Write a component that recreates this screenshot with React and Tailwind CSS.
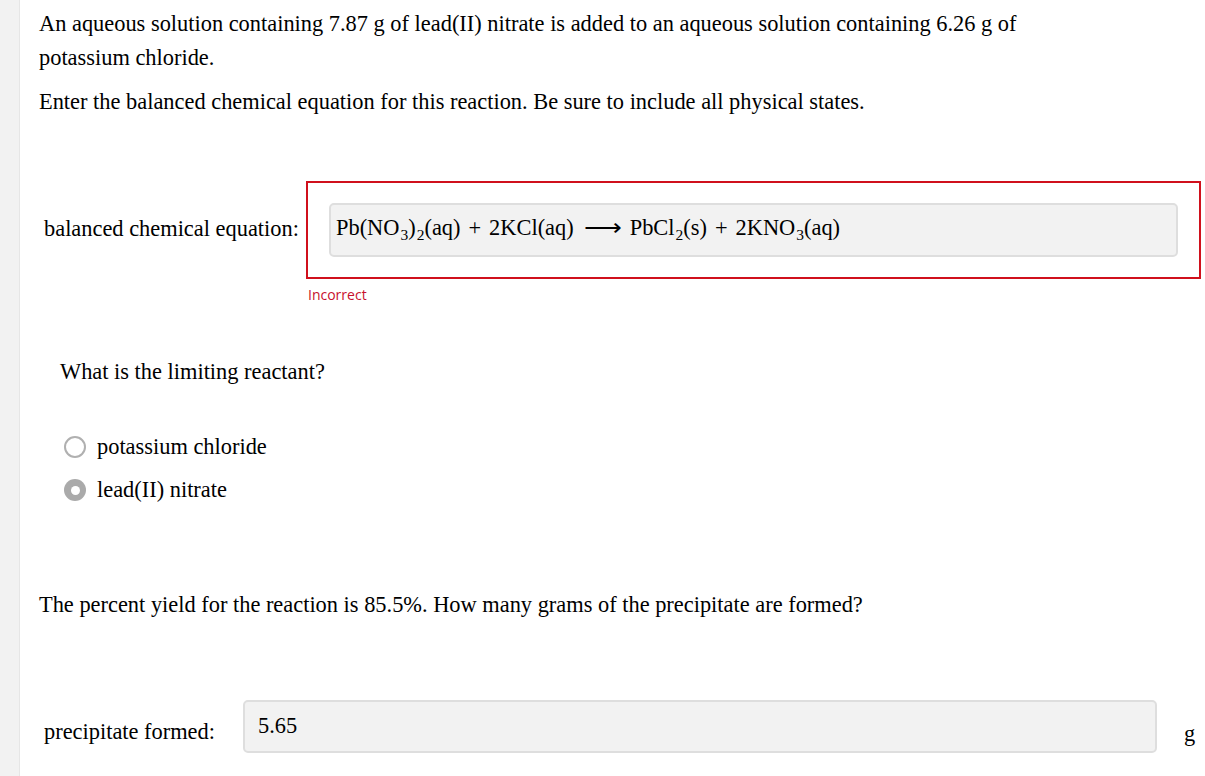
import React from "react";

const serif = { fontFamily: '"Liberation Serif", "Times New Roman", serif' };

function Sub({ children }) {
  return <sub className="text-[15.5px] relative top-[5px] align-baseline ml-[1px]">{children}</sub>;
}

function Plus() {
  return <span className="mx-[8px]">+</span>;
}

export default function App() {
  return (
    <div className="flex min-h-screen bg-white text-black leading-[30px]" style={serif}>
      <div className="w-[20px] shrink-0 bg-[#f2f2f2] border-r border-[#e6e6e6]" />
      <div className="flex-1 pl-[19px] pr-[4px] pt-[7px] text-[22.4px]">
        <p className="leading-[34px] pr-[150px]">
          An aqueous solution containing 7.87 g of lead(II) nitrate is added to an aqueous solution containing 6.26 g of potassium chloride.
        </p>
        <p className="leading-[34px] mt-[10px]">
          Enter the balanced chemical equation for this reaction. Be sure to include all physical states.
        </p>

        <div className="mt-[62px] flex items-center">
          <div className="w-[267px] pl-[5px] shrink-0 pb-[2px]">balanced chemical equation:</div>
          <div className="flex-1 border-2 border-[#d0101c] h-[98px] flex items-center pl-[21px] pr-[21px]">
            <div className="flex-1 h-[54px] bg-[#f2f2f2] border-2 border-[#dedede] rounded-[5px] flex items-center pl-[5px] pb-[4px] whitespace-nowrap">
              <span className="flex items-baseline">
                <span>Pb(NO<Sub>3</Sub>)<Sub>2</Sub>(aq)<Plus />2KCl(aq)</span>
                <span className="inline-block ml-[13px] mr-[11px] text-[22px] scale-x-[1.2]">⟶</span>
                <span>PbCl<Sub>2</Sub>(s)<Plus />2KNO<Sub>3</Sub>(aq)</span>
              </span>
            </div>
          </div>
        </div>
        <div className="ml-[269px] mt-[6px] text-[14px] leading-[20px] text-[#c8102e]" style={{ fontFamily: '"Open Sans", sans-serif' }}>
          Incorrect
        </div>

        <div className="mt-[52px] pl-[21px]">What is the limiting reactant?</div>

        <div className="mt-[45px] pl-[25px] flex flex-col gap-[13px]">
          <label className="flex items-center gap-[11px]">
            <span className="w-[22px] h-[22px] rounded-full border-2 border-[#b0b0b0] bg-white shrink-0" />
            <span>potassium chloride</span>
          </label>
          <label className="flex items-center gap-[11px]">
            <span className="w-[22px] h-[22px] rounded-full bg-[#aaaaaa] shrink-0 flex items-center justify-center">
              <span className="w-[9px] h-[9px] rounded-full bg-white" />
            </span>
            <span>lead(II) nitrate</span>
          </label>
        </div>

        <div className="mt-[85px]">The percent yield for the reaction is 85.5%. How many grams of the precipitate are formed?</div>

        <div className="mt-[80px] flex items-center">
          <div className="w-[204px] pl-[5px] shrink-0 pt-[10px]">precipitate formed:</div>
          <div className="flex-1 h-[53px] bg-[#f2f2f2] border-2 border-[#dedede] rounded-[5px] pl-[13px] pt-[12px] leading-[24px]">5.65</div>
          <div className="w-[44px] pl-[27px] pt-[14px]">g</div>
        </div>
      </div>
    </div>
  );
}
